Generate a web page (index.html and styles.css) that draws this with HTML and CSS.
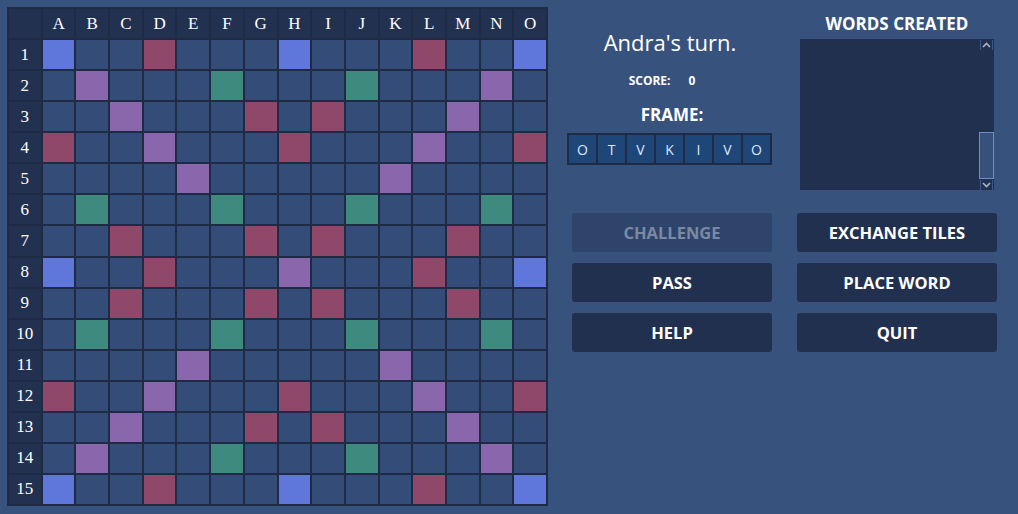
FILE: index.html
```html
<!DOCTYPE html>
<html>
<head>
<meta charset="utf-8">
<link rel="stylesheet" href="styles.css">
</head>
<body>
<div class="app">
  <div class="board">
    <div class="h"></div><div class="h">A</div><div class="h">B</div><div class="h">C</div><div class="h">D</div><div class="h">E</div><div class="h">F</div><div class="h">G</div><div class="h">H</div><div class="h">I</div><div class="h">J</div><div class="h">K</div><div class="h">L</div><div class="h">M</div><div class="h">N</div><div class="h">O</div>
    <div class="h">1</div><div class="c tw"></div><div class="c"></div><div class="c"></div><div class="c dl"></div><div class="c"></div><div class="c"></div><div class="c"></div><div class="c tw"></div><div class="c"></div><div class="c"></div><div class="c"></div><div class="c dl"></div><div class="c"></div><div class="c"></div><div class="c tw"></div>
    <div class="h">2</div><div class="c"></div><div class="c dw"></div><div class="c"></div><div class="c"></div><div class="c"></div><div class="c tl"></div><div class="c"></div><div class="c"></div><div class="c"></div><div class="c tl"></div><div class="c"></div><div class="c"></div><div class="c"></div><div class="c dw"></div><div class="c"></div>
    <div class="h">3</div><div class="c"></div><div class="c"></div><div class="c dw"></div><div class="c"></div><div class="c"></div><div class="c"></div><div class="c dl"></div><div class="c"></div><div class="c dl"></div><div class="c"></div><div class="c"></div><div class="c"></div><div class="c dw"></div><div class="c"></div><div class="c"></div>
    <div class="h">4</div><div class="c dl"></div><div class="c"></div><div class="c"></div><div class="c dw"></div><div class="c"></div><div class="c"></div><div class="c"></div><div class="c dl"></div><div class="c"></div><div class="c"></div><div class="c"></div><div class="c dw"></div><div class="c"></div><div class="c"></div><div class="c dl"></div>
    <div class="h">5</div><div class="c"></div><div class="c"></div><div class="c"></div><div class="c"></div><div class="c dw"></div><div class="c"></div><div class="c"></div><div class="c"></div><div class="c"></div><div class="c"></div><div class="c dw"></div><div class="c"></div><div class="c"></div><div class="c"></div><div class="c"></div>
    <div class="h">6</div><div class="c"></div><div class="c tl"></div><div class="c"></div><div class="c"></div><div class="c"></div><div class="c tl"></div><div class="c"></div><div class="c"></div><div class="c"></div><div class="c tl"></div><div class="c"></div><div class="c"></div><div class="c"></div><div class="c tl"></div><div class="c"></div>
    <div class="h">7</div><div class="c"></div><div class="c"></div><div class="c dl"></div><div class="c"></div><div class="c"></div><div class="c"></div><div class="c dl"></div><div class="c"></div><div class="c dl"></div><div class="c"></div><div class="c"></div><div class="c"></div><div class="c dl"></div><div class="c"></div><div class="c"></div>
    <div class="h">8</div><div class="c tw"></div><div class="c"></div><div class="c"></div><div class="c dl"></div><div class="c"></div><div class="c"></div><div class="c"></div><div class="c dw"></div><div class="c"></div><div class="c"></div><div class="c"></div><div class="c dl"></div><div class="c"></div><div class="c"></div><div class="c tw"></div>
    <div class="h">9</div><div class="c"></div><div class="c"></div><div class="c dl"></div><div class="c"></div><div class="c"></div><div class="c"></div><div class="c dl"></div><div class="c"></div><div class="c dl"></div><div class="c"></div><div class="c"></div><div class="c"></div><div class="c dl"></div><div class="c"></div><div class="c"></div>
    <div class="h">10</div><div class="c"></div><div class="c tl"></div><div class="c"></div><div class="c"></div><div class="c"></div><div class="c tl"></div><div class="c"></div><div class="c"></div><div class="c"></div><div class="c tl"></div><div class="c"></div><div class="c"></div><div class="c"></div><div class="c tl"></div><div class="c"></div>
    <div class="h">11</div><div class="c"></div><div class="c"></div><div class="c"></div><div class="c"></div><div class="c dw"></div><div class="c"></div><div class="c"></div><div class="c"></div><div class="c"></div><div class="c"></div><div class="c dw"></div><div class="c"></div><div class="c"></div><div class="c"></div><div class="c"></div>
    <div class="h">12</div><div class="c dl"></div><div class="c"></div><div class="c"></div><div class="c dw"></div><div class="c"></div><div class="c"></div><div class="c"></div><div class="c dl"></div><div class="c"></div><div class="c"></div><div class="c"></div><div class="c dw"></div><div class="c"></div><div class="c"></div><div class="c dl"></div>
    <div class="h">13</div><div class="c"></div><div class="c"></div><div class="c dw"></div><div class="c"></div><div class="c"></div><div class="c"></div><div class="c dl"></div><div class="c"></div><div class="c dl"></div><div class="c"></div><div class="c"></div><div class="c"></div><div class="c dw"></div><div class="c"></div><div class="c"></div>
    <div class="h">14</div><div class="c"></div><div class="c dw"></div><div class="c"></div><div class="c"></div><div class="c"></div><div class="c tl"></div><div class="c"></div><div class="c"></div><div class="c"></div><div class="c tl"></div><div class="c"></div><div class="c"></div><div class="c"></div><div class="c dw"></div><div class="c"></div>
    <div class="h">15</div><div class="c tw"></div><div class="c"></div><div class="c"></div><div class="c dl"></div><div class="c"></div><div class="c"></div><div class="c"></div><div class="c tw"></div><div class="c"></div><div class="c"></div><div class="c"></div><div class="c dl"></div><div class="c"></div><div class="c"></div><div class="c tw"></div>
  </div>

  <div class="side">
    <div class="top">
      <div class="player">
        <div class="turn">Andra's turn.</div>
        <div class="score"><span>SCORE:</span><span>0</span></div>
        <div class="frame-label">FRAME:</div>
        <div class="frame">
          <div class="tile">O</div><div class="tile">T</div><div class="tile">V</div><div class="tile">K</div><div class="tile">I</div><div class="tile">V</div><div class="tile">O</div>
        </div>
      </div>
      <div class="words">
        <div class="words-label">WORDS CREATED</div>
        <div class="words-box">
          <div class="words-list"></div>
          <div class="scrollbar">
            <div class="sb-btn"><svg width="9" height="6" viewBox="0 0 9 6"><polyline points="1,5 4.5,1.5 8,5" fill="none" stroke="#a9b4c8" stroke-width="1.6"/></svg></div>
            <div class="sb-track"><div class="sb-thumb"></div></div>
            <div class="sb-btn"><svg width="9" height="6" viewBox="0 0 9 6"><polyline points="1,1 4.5,4.5 8,1" fill="none" stroke="#a9b4c8" stroke-width="1.6"/></svg></div>
          </div>
        </div>
      </div>
    </div>
    <div class="buttons">
      <div class="btn disabled">CHALLENGE</div>
      <div class="btn">EXCHANGE TILES</div>
      <div class="btn">PASS</div>
      <div class="btn">PLACE WORD</div>
      <div class="btn">HELP</div>
      <div class="btn">QUIT</div>
    </div>
  </div>
</div>
</body>
</html>
```

FILE: styles.css
```css
* { box-sizing: border-box; }
html, body { margin: 0; }
body {
  background: #37527d;
  padding: 7px;
  height: 514px;
  overflow: hidden;
  font-family: "Open Sans", "Noto Sans", sans-serif;
  color: #fff;
}
.app { display: flex; align-items: flex-start; }

.board {
  width: 541px;
  height: 499px;
  flex: none;
  background: #1f2b45;
  padding: 2px;
  display: grid;
  grid-template-columns: repeat(16, 1fr);
  grid-template-rows: repeat(16, 1fr);
  gap: 2px;
}
.h {
  background: #233151;
  display: flex;
  align-items: center;
  justify-content: center;
  font-family: "Liberation Serif", serif;
  font-size: 17px;
  color: #fff;
}
.c { background: #344d78; }
.c.tw { background: #5f76da; }
.c.dl { background: #8f4869; }
.c.dw { background: #8a66ad; }
.c.tl { background: #3f8a7e; }

.side { margin-left: 24px; }
.top { display: flex; gap: 25px; height: 183px; }
.player {
  width: 200px;
  display: flex;
  flex-direction: column;
  align-items: center;
}
.turn {
  margin-top: 22px;
  margin-right: 4px;
  font-size: 22px;
  line-height: 26px;
}
.score {
  margin-top: 18px;
  display: flex;
  gap: 18px;
  padding-right: 20px;
  font-size: 12px;
  font-weight: 700;
  line-height: 16px;
}
.frame-label {
  margin-top: 16px;
  font-size: 17px;
  font-weight: 700;
  line-height: 20px;
}
.frame {
  margin-top: 8px;
  margin-left: -5px;
  width: 205px;
  height: 32px;
  background: #1f2b45;
  padding: 2px;
  display: grid;
  grid-template-columns: repeat(7, 1fr);
  gap: 2px;
}
.tile {
  background: #1f4679;
  display: flex;
  align-items: center;
  justify-content: center;
  font-size: 14px;
  color: #dde6f4;
}

.words {
  width: 200px;
  display: flex;
  flex-direction: column;
  align-items: center;
}
.words-label {
  margin-top: 7px;
  font-size: 17px;
  font-weight: 700;
  line-height: 20px;
}
.words-box {
  margin-top: 5px;
  width: 194px;
  height: 151px;
  background: #22304f;
  display: flex;
}
.words-list { flex: 1; }
.scrollbar {
  width: 15px;
  display: flex;
  flex-direction: column;
  padding-top: 1px;
}
.sb-btn {
  height: 10px;
  margin: 0 1px;
  border-left: 1px solid #3e5682;
  border-right: 1px solid #3e5682;
  display: flex;
  align-items: center;
  justify-content: center;
}
.sb-track {
  flex: 1;
  display: flex;
  flex-direction: column;
  justify-content: flex-end;
  padding-bottom: 1px;
}
.sb-thumb {
  height: 47px;
  background: #36517c;
  border: 1px solid #6e8ec2;
}

.buttons {
  margin-top: 23px;
  display: grid;
  grid-template-columns: 200px 200px;
  column-gap: 25px;
  row-gap: 11px;
}
.btn {
  height: 39px;
  background: #22304f;
  border-radius: 3px;
  display: flex;
  align-items: center;
  justify-content: center;
  font-size: 16.5px;
  font-weight: 700;
  color: #fff;
}
.btn.disabled {
  background: #2f446b;
  color: #7b89a5;
}
```
